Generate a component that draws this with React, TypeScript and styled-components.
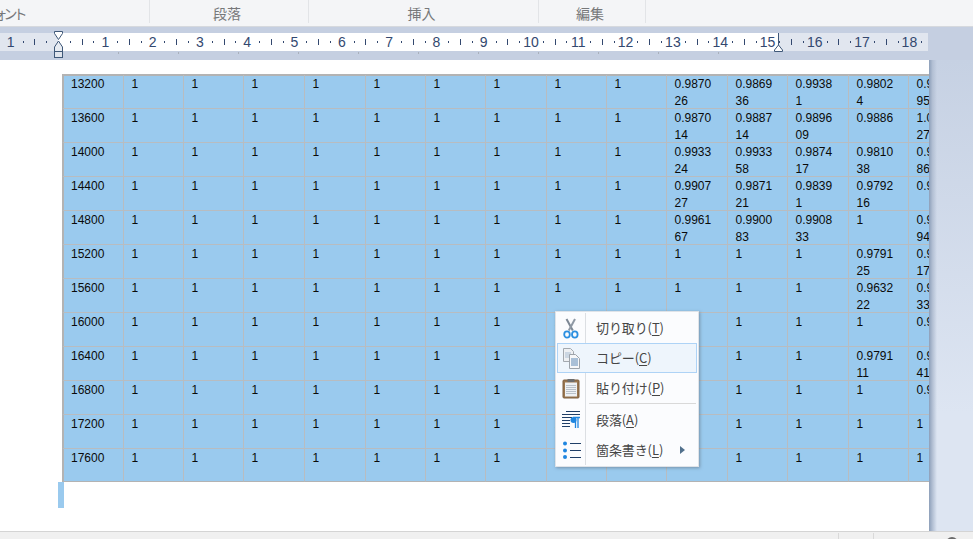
import React from "react";
import styled, { createGlobalStyle } from "styled-components";

const Global = createGlobalStyle`
  html, body { margin: 0; padding: 0; background: #fff; }
  body { font-family: "Liberation Sans", "Noto Sans CJK JP", sans-serif; }
`;

const Shell = styled.div`
  position: relative;
  width: 973px;
  height: 539px;
  overflow: hidden;
  display: flex;
  flex-direction: column;
`;

const RibbonBar = styled.div`
  height: 26px;
  flex: none;
  display: flex;
  background: #f4f5f7;
  border-bottom: 1px solid #d6d9de;
`;

const RibbonGroup = styled.div<{ $w: number; $shift?: number }>`
  width: ${(p) => p.$w}px;
  flex: none;
  height: 23px;
  margin-left: ${(p) => p.$shift ?? 0}px;
  border-right: 1px solid #e2e4e7;
  box-sizing: border-box;
  padding: 4px ${(p) => (p.$shift ? 0 : 4)}px 0 ${(p) => (p.$shift ? 8 : 0)}px;
  display: flex;
  align-items: center;
  justify-content: center;
  letter-spacing: ${(p) => (p.$shift ? "-4px" : "0")};
  font: 14px/23px "Noto Sans CJK JP", sans-serif;
  color: #77787a;
`;

const RulerBand = styled.div`
  height: 33px;
  flex: none;
  background: #c5cfe1;
  padding-top: 6px;
  box-sizing: border-box;
`;

const RulerTrack = styled.div`
  position: relative;
  width: 928px;
  height: 18px;
  display: flex;
`;

const RulerPart = styled.div<{ $w?: number; $white?: boolean }>`
  flex: ${(p) => (p.$w ? "none" : "1")};
  width: ${(p) => (p.$w ? `${p.$w}px` : "auto")};
  background: ${(p) => (p.$white ? "#ffffff" : "#e1e6ef")};
`;

const RulerMarks = styled.svg`
  position: absolute;
  left: 0;
  top: -6px;
  overflow: visible;
`;

const RulerNum = styled.text`
  font: 14px "Liberation Sans", sans-serif;
  fill: #33486f;
  text-anchor: middle;
`;

const Workspace = styled.div`
  flex: 1;
  min-height: 0;
  display: flex;
  background: linear-gradient(180deg, #c6d1e3 0%, #dde5f2 75%);
`;

const Page = styled.div`
  width: 929px;
  flex: none;
  background: #fff;
  overflow: hidden;
  padding: 14px 0 0 62px;
  box-sizing: border-box;
`;

const PageShadow = styled.div`
  width: 8px;
  flex: none;
  background: linear-gradient(90deg, #8d9fb9 0%, #b3c0d4 45%, rgba(200, 210, 228, 0) 100%);
`;

const SheetGrid = styled.div`
  display: grid;
  grid-template-columns: 62px 60px 60px 61px 61px 60px 60px 61px 60px 60px 61px 60px 61px 60px 60px;
  grid-template-rows: repeat(11, 34px) 33px;
  width: 907px;
  background: #9acaee;
  border-top: 1px solid #b3b3b3;
  font: 12px/17px "Liberation Sans", sans-serif;
  color: #0a0a0a;
`;

const Cell = styled.div<{ $first?: boolean; $topRow?: boolean; $lastRow?: boolean }>`
  box-sizing: border-box;
  padding: 1px 10px 0 ${(p) => (p.$first ? 7 : 7.5)}px;
  word-break: break-all;
  border-right: 1px solid #b8bcc0;
  border-bottom: 1px solid ${(p) => (p.$lastRow ? "#b3b3b3" : "#b8bcc0")};
  border-left: ${(p) => (p.$first ? "2px solid #b3b3b3" : "0")};
  box-shadow: ${(p) => (p.$topRow ? "inset 0 1px 0 #b3b3b3" : "none")};
`;

const ParagraphMark = styled.div`
  width: 6px;
  height: 26px;
  margin-left: -4px;
  background: #9acaee;
`;

const StatusBar = styled.div`
  height: 7px;
  flex: none;
  background: #f0f0f0;
  border-top: 1px solid #d4d4d4;
  display: flex;
  margin-top: -1px;
  position: relative;
`;

const StatusCell = styled.div<{ $w: number }>`
  width: ${(p) => p.$w}px;
  flex: none;
  border-right: 1px solid #d9d9d9;
  margin-top: 1px;
  box-sizing: border-box;
`;

const StatusKnob = styled.div`
  width: 12px;
  height: 12px;
  margin: 5px 0 0 72px;
  border-radius: 50%;
  background: #6a6a6a;
`;

const Menu = styled.div`
  position: absolute;
  left: 555px;
  top: 311px;
  width: 144px;
  height: 156px;
  box-sizing: border-box;
  background: #fbfcfe;
  border: 1px solid #dfe3e8;
  box-shadow: 1px 1px 3px rgba(90, 100, 115, 0.55);
  padding: 1px;
  font: 13px/18px "Noto Sans CJK JP", sans-serif;
  color: #454545;
`;

const MenuRail = styled.div`
  position: absolute;
  left: 29px;
  top: 1px;
  bottom: 1px;
  width: 1px;
  background: #dcdfe3;
`;

const MenuItem = styled.div<{ $active?: boolean }>`
  position: relative;
  height: 30px;
  box-sizing: border-box;
  display: flex;
  align-items: center;
  border: 1px solid ${(p) => (p.$active ? "#aed3f6" : "transparent")};
  background: ${(p) => (p.$active ? "#eef5fc" : "transparent")};
`;

const MenuIcon = styled.span`
  width: 28px;
  flex: none;
  display: flex;
  justify-content: center;
  margin-left: -1px;
`;

const MenuLabel = styled.span`
  margin-left: 11px;
  white-space: nowrap;
  letter-spacing: -0.1px;
  flex: 1;
  u { text-underline-offset: 2px; }
`;

const MenuDivider = styled.div`
  height: 1px;
  margin: 0 1px 1px 32px;
  background: #d9d9d9;
`;

const SubArrow = styled.span`
  width: 0;
  height: 0;
  margin-right: 11px;
  border-left: 5px solid #51708c;
  border-top: 4px solid transparent;
  border-bottom: 4px solid transparent;
`;

const tail = [
  ["0.987026", "0.986936", "0.99381", "0.98024", "0.987695"],
  ["0.987014", "0.988714", "0.989609", "0.9886", "1.000027"],
  ["0.993324", "0.993358", "0.987417", "0.981038", "0.987686"],
  ["0.990727", "0.987121", "0.98391", "0.979216", "0.9876"],
  ["0.996167", "0.990083", "0.990833", "1", "0.987694"],
  ["1", "1", "1", "0.979125", "0.987617"],
  ["1", "1", "1", "0.963222", "0.987633"],
  ["1", "1", "1", "1", "0.9876"],
  ["1", "1", "1", "0.979111", "0.987641"],
  ["1", "1", "1", "1", "0.9876"],
  ["1", "1", "1", "1", "1"],
  ["1", "1", "1", "1", "1"],
];
const rowNames = [13200, 13600, 14000, 14400, 14800, 15200, 15600, 16000, 16400, 16800, 17200, 17600];
const UNIT = 47.3;
const ORIGIN = 58;

function Ruler() {
  const nums: { x: number; t: number }[] = [{ x: ORIGIN - UNIT, t: 1 }];
  for (let i = 1; i <= 18; i++) nums.push({ x: ORIGIN + i * UNIT, t: i });
  const marks: React.ReactNode[] = [];
  for (let i = -2; i < 19; i++) {
    [0.25, 0.5, 0.75].forEach((f) => {
      const x = Math.round(ORIGIN + (i + f) * UNIT);
      if (x < 0 || x > 926) return;
      const tall = f === 0.5;
      marks.push(
        <rect key={`${i}-${f}`} x={x} y={tall ? 12 : 14} width={1} height={tall ? 6 : 2} fill="#33486f" />
      );
    });
  }
  const cols = [118, 178, 238, 298, 358, 418, 478, 538, 598, 658, 718];
  return (
    <RulerMarks width={928} height={33} viewBox="0 0 928 33">
      {marks}
      {nums.map((n) => (
        <RulerNum key={n.x} x={n.x} y={20}>{n.t}</RulerNum>
      ))}
      {cols.map((x) => (
        <rect key={x} x={x} y={25} width={1} height={2} fill="#a9b0bb" />
      ))}
      <path d="M54.5 4.5h8v2l-4 6-4-6z" fill="#fff" stroke="#3f5878" />
      <path d="M58.5 14l4 6v4.500h-8V20z" fill="#e8ecf2" stroke="#3f5878" />
      <rect x="54.500" y="24.500" width="8" height="6" fill="#dfe4ec" stroke="#3f5878" />
      <rect x="778" y="6" width="1" height="12" fill="#3f5878" />
      <path d="M778.5 18l4 5v1.500h-8V23z" fill="#fff" stroke="#3f5878" />
    </RulerMarks>
  );
}

const Scissors = () => (
  <svg width="16" height="21" viewBox="0 0 16 21">
    <path d="M3.500 1L9.800 12.500" stroke="#7c8794" strokeWidth="2" fill="none" />
    <path d="M12 1L5.800 12.500" stroke="#8f99a5" strokeWidth="2" fill="none" />
    <ellipse cx="4" cy="16.500" rx="2.800" ry="3.200" fill="none" stroke="#2b8fe0" strokeWidth="1.800" />
    <ellipse cx="11.800" cy="16.500" rx="2.800" ry="3.200" fill="none" stroke="#2b8fe0" strokeWidth="1.800" />
  </svg>
);

const CopyIcon = () => (
  <svg width="17" height="21" viewBox="0 0 17 21">
    <path d="M.5.500h7l3 3v10h-10z" fill="#eef0f3" stroke="#a3a8ae" />
    <path d="M2 5h6M2 7h6M2 9h6" stroke="#a9bdd2" />
    <path d="M6.500 6.500h6l4 4v10h-10z" fill="#f6f7f9" stroke="#9da3aa" />
    <path d="M8 11h7M8 13h7M8 15h7M8 17h7" stroke="#5c88b5" />
  </svg>
);

const ClipboardIcon = () => (
  <svg width="18" height="21" viewBox="0 0 18 21">
    <rect x="1" y="2" width="16" height="18" rx="1" fill="#9a7750" stroke="#7f6040" />
    <rect x="3" y="4.500" width="12" height="14" fill="#eef1f4" />
    <path d="M4 7.500h10M4 9.500h10M4 11.500h10M4 13.500h10M4 15.500h10" stroke="#b9c1c9" />
    <rect x="5.500" y="1" width="7" height="3" fill="#6d6d6d" />
  </svg>
);

const ParaIcon = () => (
  <svg width="19" height="18" viewBox="0 0 19 18">
    <path d="M4 .5h14M0 3.500h18M0 6.500h10M0 9.500h8M0 12.500h8M0 15.500h8" stroke="#1f3f68" />
    <circle cx="11.500" cy="9" r="3" fill="#1f86e0" />
    <path d="M11 6.500h7M13.500 6.500V17M16 6.500V17" stroke="#1f86e0" strokeWidth="1.300" fill="none" />
  </svg>
);

const BulletIcon = () => (
  <svg width="19" height="19" viewBox="0 0 19 19">
    <circle cx="3" cy="2.500" r="2" fill="#1f86e0" />
    <circle cx="3" cy="9.500" r="2" fill="#1f86e0" />
    <circle cx="3" cy="16" r="2" fill="#1f86e0" />
    <path d="M8 2.500h11M8 9.500h11M8 16.500h11" stroke="#1f3f68" />
  </svg>
);

export default function App() {
  return (
    <Shell>
      <Global />
      <RibbonBar>
        <RibbonGroup $w={300} $shift={-150}>フォント</RibbonGroup>
        <RibbonGroup $w={159}>段落</RibbonGroup>
        <RibbonGroup $w={230}>挿入</RibbonGroup>
        <RibbonGroup $w={107}>編集</RibbonGroup>
      </RibbonBar>
      <RulerBand>
        <RulerTrack>
          <RulerPart $w={58} />
          <RulerPart $w={720} $white />
          <RulerPart />
          <Ruler />
        </RulerTrack>
      </RulerBand>
      <Workspace>
        <Page>
          <SheetGrid>
            {rowNames.map((name, r) => {
              const edge = { $topRow: r === 0, $lastRow: r === rowNames.length - 1 };
              return (
                <React.Fragment key={name}>
                  <Cell $first {...edge}>{name}</Cell>
                  {Array.from({ length: 9 }).map((_, i) => (
                    <Cell key={i} {...edge}>1</Cell>
                  ))}
                  {tail[r].map((v, i) => (
                    <Cell key={`t${i}`} {...edge}>{v}</Cell>
                  ))}
                </React.Fragment>
              );
            })}
          </SheetGrid>
          <ParagraphMark />
        </Page>
        <PageShadow />
      </Workspace>
      <StatusBar>
        <StatusCell $w={839} />
        <StatusCell $w={35} />
        <StatusKnob />
      </StatusBar>
      <Menu>
        <MenuRail />
        <MenuItem>
          <MenuIcon><Scissors /></MenuIcon>
          <MenuLabel>切り取り(<u>T</u>)</MenuLabel>
        </MenuItem>
        <MenuItem $active>
          <MenuIcon><CopyIcon /></MenuIcon>
          <MenuLabel>コピー(<u>C</u>)</MenuLabel>
        </MenuItem>
        <MenuItem>
          <MenuIcon><ClipboardIcon /></MenuIcon>
          <MenuLabel>貼り付け(<u>P</u>)</MenuLabel>
        </MenuItem>
        <MenuDivider />
        <MenuItem>
          <MenuIcon><ParaIcon /></MenuIcon>
          <MenuLabel>段落(<u>A</u>)</MenuLabel>
        </MenuItem>
        <MenuItem>
          <MenuIcon><BulletIcon /></MenuIcon>
          <MenuLabel>箇条書き(<u>L</u>)</MenuLabel>
          <SubArrow />
        </MenuItem>
      </Menu>
    </Shell>
  );
}
